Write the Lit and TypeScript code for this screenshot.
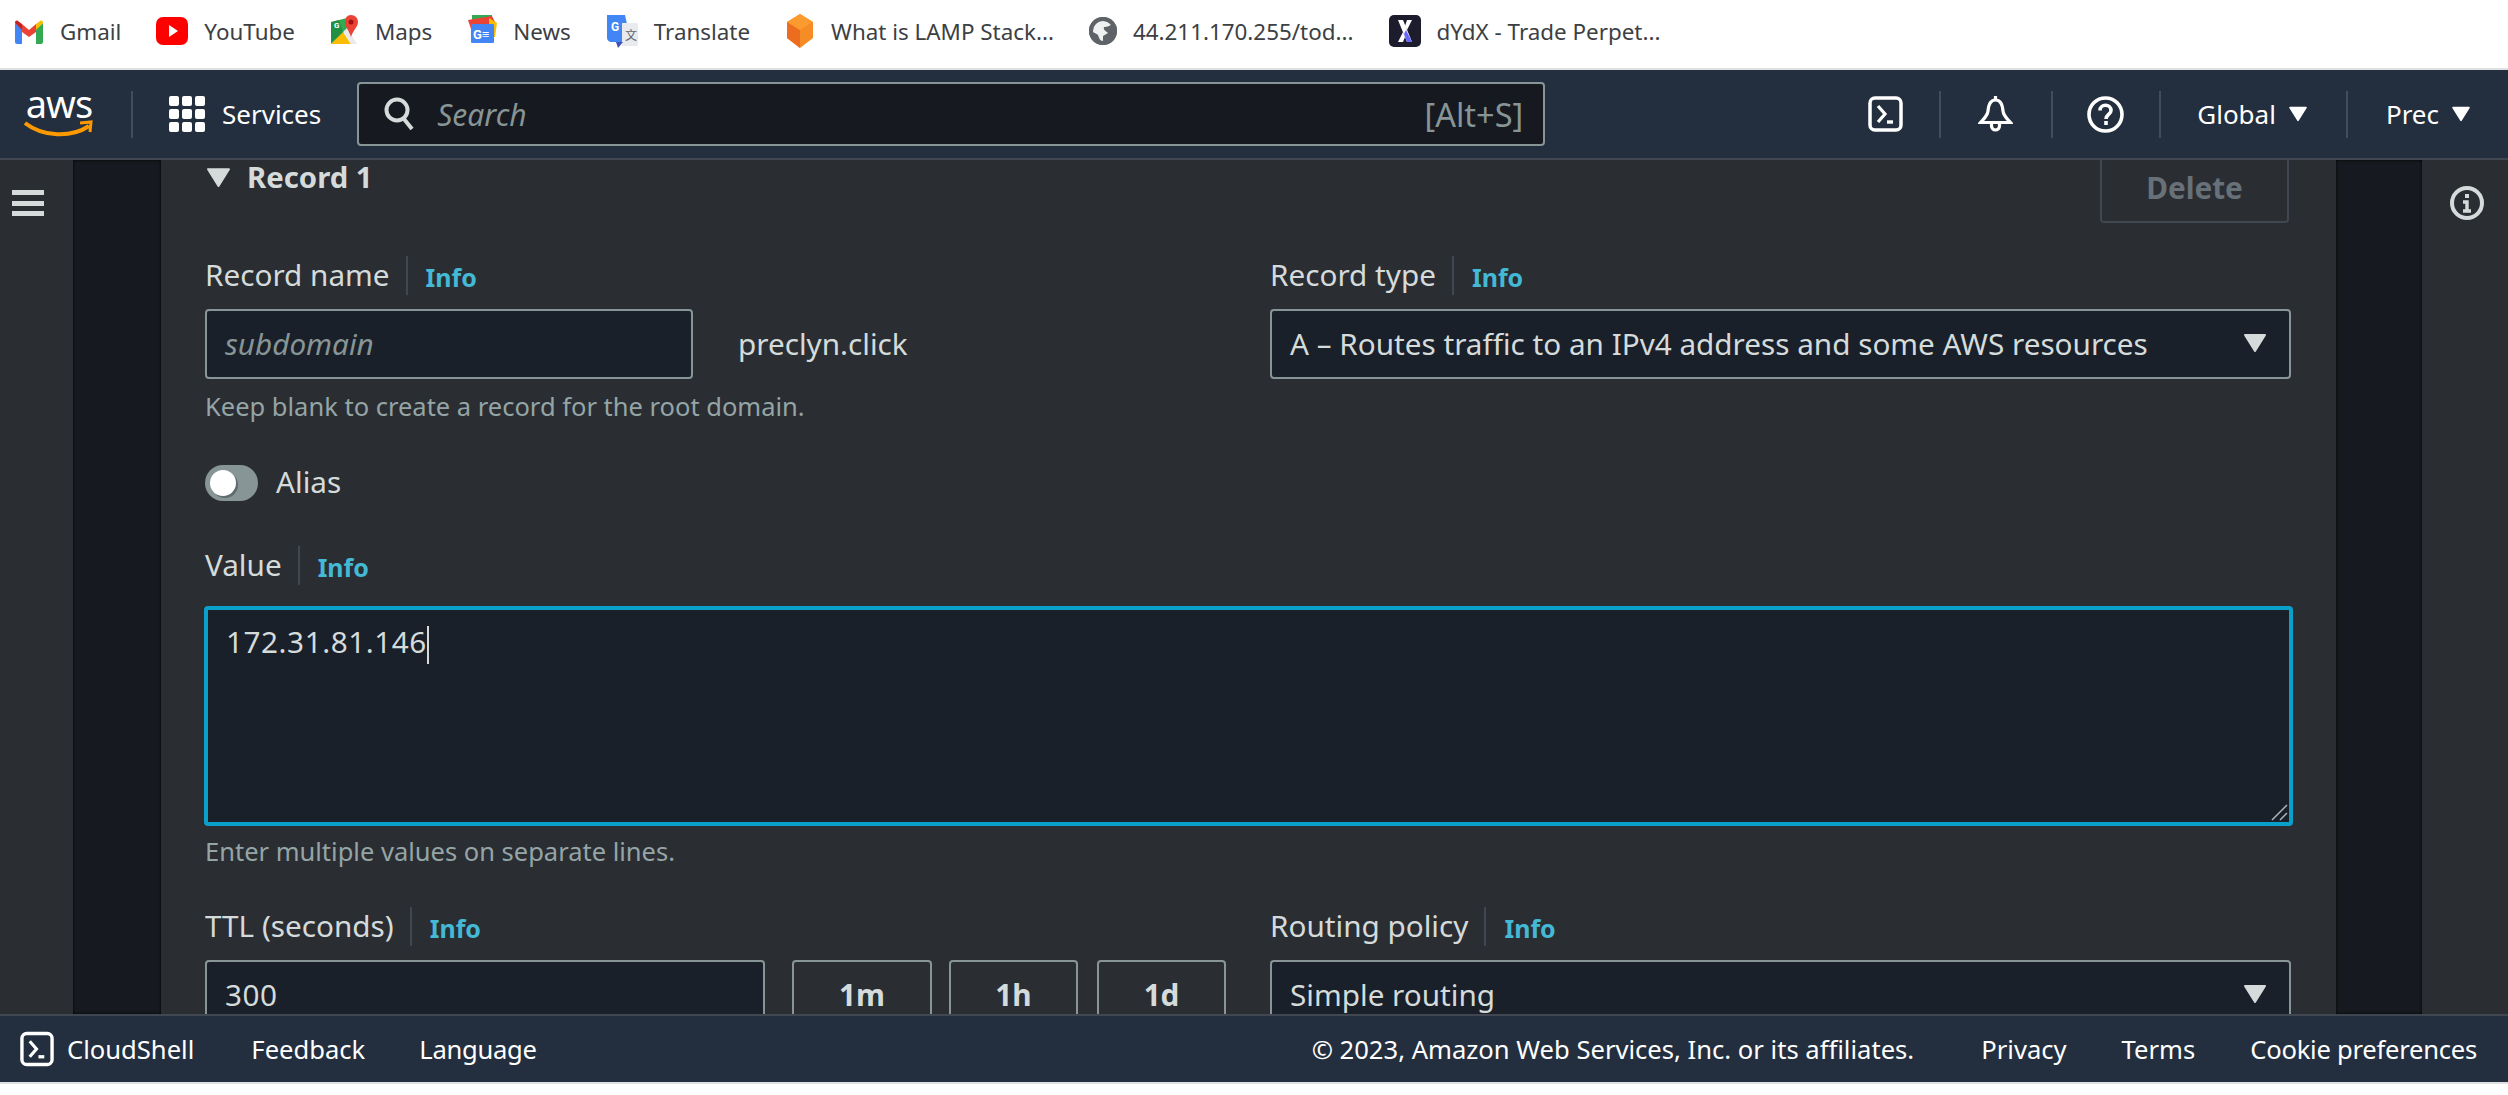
import { LitElement, html, css, svg } from 'lit';
import { customElement } from 'lit/decorators.js';

const caret = (w: number, h: number) => html`<svg class="tri" width=${w} height=${h} viewBox="0 0 24 20"><path d="M2 2h20L12 18z" fill="currentColor" stroke="currentColor" stroke-width="2" stroke-linejoin="round"/></svg>`;

const consoleIcon = (w: number, h: number) => html`<svg width=${w} height=${h} viewBox="0 0 35 36" fill="none" stroke="#fff"><rect x="2" y="2" width="31" height="32" rx="5" stroke-width="3.5"/><path d="M10 10l7 8-7 8" stroke-width="3.2"/><path d="M19 26h6" stroke-width="3.4"/></svg>`;

const bookmarkIcons: Record<string, unknown> = {
    gmail: svg`<path d="M1 9v19c0 1 1 2 2 2h5V15z" fill="#4285f4"/><path d="M29 9v19c0 1-1 2-2 2h-5V15z" fill="#34a853"/><path d="M8 16v-6L4 7C2 6 1 7 1 9z" fill="#c5221f"/><path d="M8 10l7 6 7-6v8l-7 5-7-5z" fill="#ea4335"/><path d="M22 10l4-3c2-1 3 0 3 2l-7 7z" fill="#fbbc04"/>`,
    youtube: svg`<rect x="0" y="3" width="32" height="28" rx="7" fill="#f00"/><path d="M13 11l9 6-9 6z" fill="#fff"/>`,
    maps: svg`<path d="M1 8l16-4v13L1 30z" fill="#34a853"/><path d="M1 30l12-12 8 12z" fill="#fbbc04"/><path d="M13 18l4-4 10 16h-6z" fill="#e8eaed"/><path d="M1 8l8-2 4 12-12 11z" fill="#188038" opacity=".6"/><path d="M21 1c4 0 7 3 7 7 0 5-5 8-7 15-2-7-6-10-6-15 0-4 2-7 6-7z" fill="#ea4335"/><circle cx="21" cy="8" r="2.5" fill="#a50e0e"/><text x="4" y="14" font-size="8" font-weight="700" fill="#fff" font-family="Roboto">G</text>`,
    news: svg`<path d="M5 1h20v12H5z" fill="#34a853"/><path d="M1 6l24-4 4 8-24 8z" fill="#ea4335"/><path d="M22 4l8 5-2 14h-6z" fill="#fbbc04"/><rect x="4" y="10" width="23" height="19" rx="1" fill="#4285f4"/><text x="6" y="25" font-size="13" font-weight="700" fill="#fff" font-family="Roboto">G≡</text>`,
    translate: svg`<path d="M1 1h18l6 27H5c-2 0-4-2-4-4z" fill="#4285f4"/><path d="M16 9h14c1 0 2 1 2 2v19c0 1-1 2-2 2H16z" fill="#e8eaed"/><path d="M10 28h7l-5 6z" fill="#3f51b5"/><text x="5" y="17" font-size="12" font-weight="700" fill="#fff" font-family="Roboto">G</text><text x="19" y="26" font-size="12" fill="#5f6368" font-family="'Noto Sans CJK SC'">文</text>`,
    lamp: svg`<path d="M15 0l13 8v16l-13 10L2 24V8z" fill="#f58c25"/><path d="M15 16v18L2 24V8z" fill="#ec6c20"/><path d="M15 16L2 8l13-8 13 8z" fill="#fb9a2e"/>`,
    globe: svg`<circle cx="14" cy="17" r="14" fill="#5f6368"/><path d="M12 5c3 3 8 2 11 4-1 3-5 4-8 4-1 3 2 4 4 6l-5 3 0 6c-3-1-4-4-5-7-2-2-7-3-8-5C3 11 7 7 12 5z" fill="#fff" opacity=".9"/><circle cx="14" cy="17" r="12" fill="none" stroke="#5f6368" stroke-width="4"/>`,
    dydx: svg`<rect x="0" y="1" width="32" height="32" rx="5" fill="#1c1c2c"/><path d="M9 6h5l9 22h-5z" fill="#fff"/><path d="M23 6l-5 10-2-4 2-6z" fill="#fff"/><path d="M9 28l5-10 2 5-2 5z" fill="#fff"/><path d="M18 28l-3-8 2-4 6 12z" fill="#6966ff"/>`,
};

const bookmarks = [
    { icon: 'gmail', w: 30, label: 'Gmail' },
    { icon: 'youtube', w: 32, label: 'YouTube' },
    { icon: 'maps', w: 29, label: 'Maps' },
    { icon: 'news', w: 30, label: 'News' },
    { icon: 'translate', w: 32, label: 'Translate' },
    { icon: 'lamp', w: 30, label: 'What is LAMP Stack...' },
    { icon: 'globe', w: 28, label: '44.211.170.255/tod...' },
    { icon: 'dydx', w: 32, label: 'dYdX - Trade Perpet...' },
];

@customElement('app-root')
export class AppRoot extends LitElement {
    static styles = css`
    :host {
      display: flex;
      flex-direction: column;
      height: 1095px;
      overflow: hidden;
      background: #fff;
      font-family: 'Noto Sans', 'Open Sans', sans-serif;
      font-size: 29.7px;
      color: #d5dbdb;
    }
    .bookmarks {
      height: 68px;
      box-sizing: border-box;
      flex: none;
      display: flex;
      align-items: center;
      gap: 35px;
      padding: 0 0 6px 14px;
      background: #fff;
      color: #3c4043;
      font-size: 22.4px;
    }
    .bookmark { display: flex; align-items: center; gap: 16px; white-space: nowrap; }
    .topbar {
      position: relative;
      z-index: 1;
      height: 92px;
      box-sizing: border-box;
      flex: none;
      display: flex;
      align-items: center;
      background: #232f3e;
      color: #fff;
      font-size: 26px;
      border-top: 2px solid #e0e0e0;
      border-bottom: 2px solid #414750;
    }
    .logo { margin-left: 24px; width: 70px; display: flex; flex-direction: column; align-items: center; }
    .logo span { font-size: 38px; line-height: 26px; height: 30px; letter-spacing: -1px; }
    .vr { width: 2px; height: 47px; background: #414d5c; flex: none; }
    .vr.logo-rule { margin-left: 37px; }
    .grid {
      margin-left: 36px;
      display: grid;
      grid-template-columns: repeat(3, 10px);
      grid-auto-rows: 10px;
      gap: 3px;
    }
    .grid i { background: #fff; border-radius: 2px; }
    .services { margin-left: 17px; }
    .search {
      margin-left: 36px;
      width: 1188px;
      height: 64px;
      box-sizing: border-box;
      display: flex;
      align-items: center;
      padding: 0 20px 0 25px;
      background: #16191f;
      border: 2px solid #879596;
      border-radius: 4px;
      color: #879596;
      font-size: 30px;
    }
    .search em { margin-left: 23px; flex: 1; }
    .search span { font-size: 32.5px; }
    .top-right { margin-left: auto; display: flex; align-items: center; padding-right: 37px; }
    .top-right .tri { margin-left: 12px; }
    .ml-34 { margin-left: 34px; }
    .ml-35 { margin-left: 35px; }
    .ml-36 { margin-left: 36px; }
    .ml-37 { margin-left: 37px; }
    .ml-38 { margin-left: 38px; }

    /* top bar and footer sit above the form and hide what scrolled under them */
    .main { flex: 1; min-height: 0; display: flex; }
    .nav { width: 73px; flex: none; background: #2a2e33; padding: 30px 0 0 12px; box-sizing: border-box; }
    .hamburger { width: 32px; height: 26px; display: flex; flex-direction: column; justify-content: space-between; }
    .hamburger i { height: 5px; background: #d5dbdb; }
    .gutter { background: #16191f; flex: none; box-shadow: inset 0 0 3px #000; }
    .gutter.left { width: 88px; }
    .gutter.right { width: 86px; }
    .panel { flex: 1; min-width: 0; background: #2a2e33; padding: 0 45px 0 44px; }
    .rail { width: 86px; flex: none; background: #2a2e33; padding: 26px 0 0 28px; box-sizing: border-box; }

    .record-head { height: 63px; display: flex; justify-content: space-between; align-items: flex-start; }
    .record-title { height: 34px; line-height: 34px; display: flex; align-items: center; gap: 16px; font-size: 29.3px; font-weight: 700; padding-left: 1px; }
    .delete {
      width: 189px;
      height: 70px;
      margin: -7px 2px 0 0;
      padding-bottom: 2px;
      box-sizing: border-box;
      display: flex;
      align-items: center;
      justify-content: center;
      border: 2px solid #414750;
      border-radius: 4px;
      color: #687078;
      font-weight: 700;
    }
    .cols { display: grid; grid-template-columns: 1fr 1fr; column-gap: 44px; }
    .cols.first { margin-top: 33px; }
    .cols.ttl { margin-top: 38px; }
    .label { height: 39px; display: flex; align-items: center; white-space: nowrap; }
    .label span { margin-bottom: 3px; }
    .label b { color: #44b9d6; font-size: 25px; font-weight: 700; margin-left: 16px; padding-left: 18px; border-left: 2px solid #414750; height: 39px; line-height: 42px; }
    .control-row { display: flex; align-items: center; margin-top: 14px; }
    .box {
      height: 70px;
      box-sizing: border-box;
      display: flex;
      align-items: center;
      padding: 0 18px 2px;
      background: #1a2029;
      border: 2px solid #879596;
      border-radius: 4px;
      white-space: nowrap;
      color: #d5dbdb;
    }
    .box.subdomain { width: 488px; color: #879596; font-style: italic; }
    .suffix { margin: 0 0 2px 45px; }
    .box.select { flex: 1; justify-content: space-between; padding-right: 22px; }
    .help { margin-top: 9px; line-height: 36px; font-size: 25.5px; color: #95a5a6; white-space: nowrap; }
    .help.under-value { margin-top: 7px; }
    .toggle-row { margin-top: 41px; height: 36px; display: flex; align-items: center; gap: 18px; }
    .toggle-row span { margin-bottom: 3px; }
    .toggle { width: 53px; height: 36px; box-sizing: border-box; border-radius: 18px; background: #879596; padding: 5px; }
    .toggle i { display: block; width: 26px; height: 26px; border-radius: 50%; background: #fff; box-shadow: 2px 2px 0 #5f6b6c; }
    .label.value { margin-top: 45px; }
    .textarea {
      position: relative;
      margin: 21px -2px 0 -1px;
      height: 220px;
      box-sizing: border-box;
      padding: 14px 18px;
      background: #1a2029;
      border: 4px solid #0aa0c9;
      border-radius: 4px;
      line-height: 36px;
      display: flex;
      align-items: flex-start;
      letter-spacing: .55px;
    }
    .cursor { width: 2px; height: 38px; margin-top: 2px; background: #d5dbdb; }
    .grip { position: absolute; right: 1px; bottom: 1px; }
    .ttl-row { display: flex; margin-top: 14px; }
    .box.ttl-input { width: 560px; letter-spacing: .55px; }
    .unit {
      height: 70px;
      box-sizing: border-box;
      padding-bottom: 2px;
      display: flex;
      align-items: center;
      justify-content: center;
      border: 2px solid #879596;
      border-radius: 4px;
      font-weight: 700;
    }
    .unit.m { width: 140px; margin-left: 27px; }
    .unit.h { width: 129px; margin-left: 17px; }
    .unit.d { width: 129px; margin-left: 19px; }

    .footer {
      position: relative;
      z-index: 1;
      height: 68px;
      box-sizing: border-box;
      flex: none;
      display: flex;
      align-items: center;
      background: #232f3e;
      color: #fff;
      border-top: 2px solid #414750;
      font-size: 25.6px;
      white-space: nowrap;
    }
    .footer-left { display: flex; align-items: center; padding-left: 20px; }
    .footer-left span { margin-left: 57px; }
    .footer-left .shell { margin-left: 13px; }
    .footer-left .lang { margin-left: 54px; letter-spacing: -.3px; }
    .footer-right { margin-left: auto; display: flex; align-items: center; gap: 55px; padding-right: 31px; }
    .footer-right .copy { margin-right: 12px; }
    .footer-right .cookie { letter-spacing: -.25px; }
    .strip { position: relative; z-index: 1; height: 13px; flex: none; background: #fff; border-top: 2px solid #e0e0e0; box-sizing: border-box; }
  `;

    private label(text: string) {
        return html`<div class="label"><span>${text}</span><b>Info</b></div>`;
    }

    render() {
        return html`
      <div class="bookmarks">
        ${bookmarks.map(b => html`
          <div class="bookmark">
            <svg width=${b.w} height="34" viewBox="0 0 ${b.w} 34">${bookmarkIcons[b.icon]}</svg>
            <span>${b.label}</span>
          </div>`)}
      </div>

      <div class="topbar">
        <div class="logo">
          <span>aws</span>
          <svg width="70" height="18" viewBox="0 0 70 18" fill="none" stroke="#ff9900" stroke-width="4"><path d="M1 3c18 14 46 15 64 3"/><path d="M56 3l11-1-1 10" stroke-width="3"/></svg>
        </div>
        <div class="vr logo-rule"></div>
        <div class="grid">${Array.from({ length: 9 }, () => html`<i></i>`)}</div>
        <span class="services">Services</span>
        <div class="search">
          <svg width="30" height="34" viewBox="0 0 30 34" fill="none" stroke="#d5dbdb" stroke-width="4"><circle cx="13" cy="13" r="10.5"/><path d="M20 22l8 10"/></svg>
          <em>Search</em>
          <span>[Alt+S]</span>
        </div>
        <div class="top-right">
          ${consoleIcon(35, 36)}
          <div class="vr ml-36"></div>
          <svg class="ml-37" width="35" height="38" viewBox="0 0 35 38" fill="none" stroke="#fff" stroke-width="3.2"><path d="M17.500 1v4"/><path d="M17.500 5C12.500 5 10.500 10 10 16 9.500 21 5.500 24 2.500 27.500h30C29.500 24 25.500 21 25 16 24.500 10 22.500 5 17.500 5z"/><path d="M13.500 27.500v3.500a4 4 0 0 0 8 0v-3.500"/></svg>
          <div class="vr ml-38"></div>
          <svg class="ml-34" width="37" height="37" viewBox="0 0 37 37" fill="none" stroke="#fff" stroke-width="3.6"><circle cx="18.5" cy="18.5" r="16.5"/><path d="M13 14.500c0-7 11-7 11 0 0 4-5 4-5 8.500" /><path d="M19 25v4"/></svg>
          <div class="vr ml-35"></div>
          <span class="ml-36">Global</span>${caret(20, 16)}
          <div class="vr ml-38"></div>
          <span class="ml-38">Prec</span>${caret(20, 16)}
        </div>
      </div>

      <div class="main">
        <div class="nav"><div class="hamburger"><i></i><i></i><i></i></div></div>
        <div class="gutter left"></div>
        <div class="panel">
          <div class="record-head">
            <div class="record-title">${caret(25, 21)}<span>Record 1</span></div>
            <div class="delete">Delete</div>
          </div>
          <div class="cols first">
            <div>
              ${this.label('Record name')}
              <div class="control-row">
                <div class="box subdomain">subdomain</div>
                <span class="suffix">preclyn.click</span>
              </div>
              <div class="help">Keep blank to create a record for the root domain.</div>
            </div>
            <div>
              ${this.label('Record type')}
              <div class="control-row">
                <div class="box select"><span>A – Routes traffic to an IPv4 address and some AWS resources</span>${caret(24, 20)}</div>
              </div>
            </div>
          </div>
          <div class="toggle-row"><div class="toggle"><i></i></div><span>Alias</span></div>
          <div class="label value"><span>Value</span><b>Info</b></div>
          <div class="textarea">
            <span>172.31.81.146</span><i class="cursor"></i>
            <svg class="grip" width="18" height="18" viewBox="0 0 18 18" stroke="#aab7b8" stroke-width="1.5"><path d="M2 17L17 2M10 17l7-7"/></svg>
          </div>
          <div class="help under-value">Enter multiple values on separate lines.</div>
          <div class="cols ttl">
            <div>
              ${this.label('TTL (seconds)')}
              <div class="ttl-row">
                <div class="box ttl-input">300</div>
                <div class="unit m">1m</div>
                <div class="unit h">1h</div>
                <div class="unit d">1d</div>
              </div>
            </div>
            <div>
              ${this.label('Routing policy')}
              <div class="ttl-row">
                <div class="box select"><span>Simple routing</span>${caret(24, 20)}</div>
              </div>
            </div>
          </div>
        </div>
        <div class="gutter right"></div>
        <div class="rail">
          <svg width="34" height="34" viewBox="0 0 34 34" fill="none" stroke="#d5dbdb"><circle cx="17" cy="17" r="15" stroke-width="4"/><path d="M17 8v4" stroke-width="4"/><path d="M13 16h4v9M13 25h8" stroke-width="3.4"/></svg>
        </div>
      </div>

      <div class="footer">
        <div class="footer-left">
          ${consoleIcon(34, 36)}
          <span class="shell">CloudShell</span>
          <span>Feedback</span>
          <span class="lang">Language</span>
        </div>
        <div class="footer-right">
          <span class="copy">© 2023, Amazon Web Services, Inc. or its affiliates.</span>
          <span>Privacy</span>
          <span>Terms</span>
          <span class="cookie">Cookie preferences</span>
        </div>
      </div>
      <div class="strip"></div>
    `;
    }
}
